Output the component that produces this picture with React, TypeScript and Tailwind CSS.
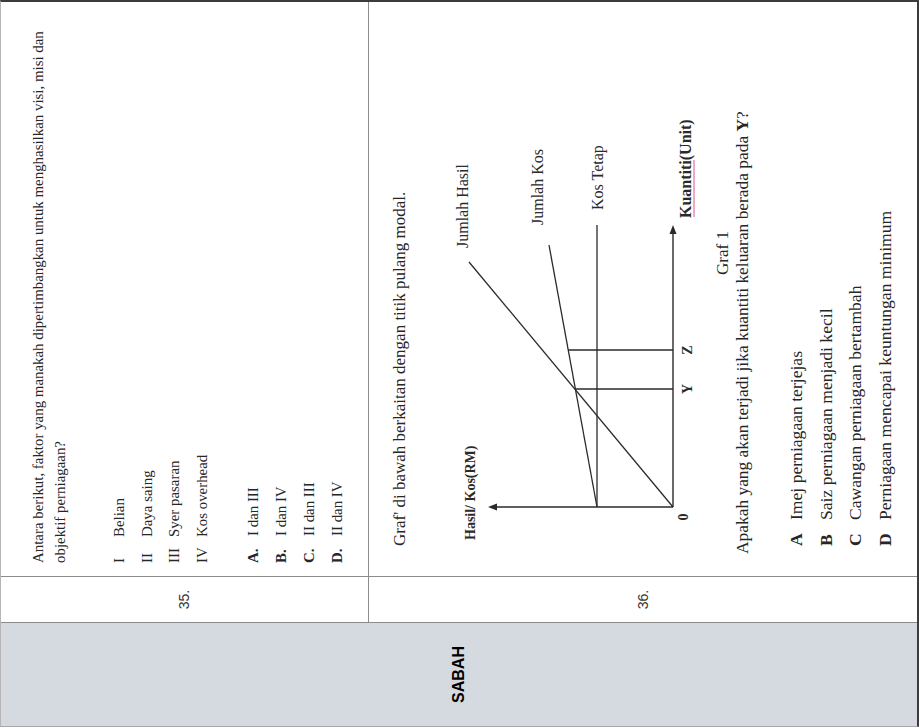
const serif = "font-['Liberation_Serif','Times_New_Roman',serif]";
const sans = "font-['Liberation_Sans',Arial,sans-serif]";

const items35 = [
  ["I", "Belian"],
  ["II", "Daya saing"],
  ["III", "Syer pasaran"],
  ["IV", "Kos overhead"],
];

const opts35 = [
  ["A.", "I dan III"],
  ["B.", "I dan IV"],
  ["C.", "II dan III"],
  ["D.", "II dan IV"],
];

const opts36 = [
  ["A", "Imej perniagaan terjejas"],
  ["B", "Saiz perniagaan menjadi kecil"],
  ["C", "Cawangan perniagaan bertambah"],
  ["D", "Perniagaan mencapai keuntungan minimum"],
];

function Graf() {
  const ink = "#2a2a2a";
  return (
    <svg width="573" height="291" viewBox="0 0 573 291" className="block">
      {/* paksi */}
      <line x1="69" y1="233" x2="69" y2="56" stroke={ink} strokeWidth="1.4" />
      <polygon points="69,48 65.5,57 72.5,57" fill={ink} />
      <line x1="69" y1="233" x2="343" y2="233" stroke={ink} strokeWidth="1.4" />
      <polygon points="351,233 342,229.5 342,236.5" fill={ink} />
      {/* garisan */}
      <line x1="69" y1="157" x2="351" y2="157" stroke={ink} strokeWidth="1.3" />
      <line x1="69" y1="157" x2="331" y2="109" stroke={ink} strokeWidth="1.3" />
      <line x1="69" y1="233" x2="314" y2="29" stroke={ink} strokeWidth="1.3" />
      <line x1="187" y1="135" x2="187" y2="233" stroke={ink} strokeWidth="1.3" />
      <line x1="226" y1="128" x2="226" y2="233" stroke={ink} strokeWidth="1.3" />
      {/* label */}
      <g fill={ink} fontFamily="'Liberation Serif', 'Times New Roman', serif" dominantBaseline="central">
        <text x="328" y="22" fontSize="16">Jumlah Hasil</text>
        <text x="351" y="97" fontSize="16">Jumlah Kos</text>
        <text x="366" y="157" fontSize="16">Kos Tetap</text>
        <text x="358" y="245" fontSize="16" fontWeight="bold">Kuantiti(Unit)</text>
        <text x="301" y="282" fontSize="17">Graf 1</text>
        <text x="36" y="30" fontSize="14" fontWeight="bold">Hasil/ Kos(RM)</text>
        <text x="59" y="243" fontSize="14" fontWeight="bold" textAnchor="middle">0</text>
        <text x="187" y="247" fontSize="14" fontWeight="bold" textAnchor="middle">Y</text>
        <text x="226" y="247" fontSize="14" fontWeight="bold" textAnchor="middle">Z</text>
      </g>
      <line x1="359" y1="254" x2="416" y2="254" stroke="#e98db3" strokeWidth="1.5" />
    </svg>
  );
}

export default function App() {
  return (
    <div className="h-[728px] w-[919px] overflow-hidden bg-white">
      {/* halaman asal diputar 90° lawan jam */}
      <div className="h-[919px] w-[728px] origin-top-left -rotate-90 translate-y-[728px] bg-white pl-[1px]">
        <div className="grid h-full grid-cols-[104px_46px_1fr] grid-rows-[368px_1fr] border-t border-l border-r-2 border-b-2 border-t-[#b5b5b5] border-l-[#a8a8a8] border-r-[#3c3c3c] border-b-[#3c3c3c] text-[#262626]">
          <div className="row-span-2 flex items-center justify-center border-r border-[#8c8c8c] bg-[#d5dae1]">
            <span className={`${sans} text-[16px] font-bold text-black`}>SABAH</span>
          </div>

          <div className="flex items-center justify-center border-r border-b border-[#8c8c8c]">
            <span className={`${sans} text-[14px] text-[#333]`}>35.</span>
          </div>
          <div className={`${serif} border-b border-[#8c8c8c] pt-[26px] pl-[13px] text-[14.9px]`}>
            <p className="leading-[22px]">
              Antara berikut, faktor yang manakah dipertimbangkan untuk menghasilkan visi, misi dan objektif perniagaan?
            </p>
            <div className="mt-[35px]">
              {items35.map(([n, t]) => (
                <div key={n} className="flex leading-[27.7px]">
                  <span className="w-[26px] shrink-0">{n}</span>
                  <span>{t}</span>
                </div>
              ))}
            </div>
            <div className="mt-[22px]">
              {opts35.map(([n, t]) => (
                <div key={n} className="flex leading-[28px]">
                  <span className="w-[27px] shrink-0 font-bold">{n}</span>
                  <span>{t}</span>
                </div>
              ))}
            </div>
          </div>

          <div className="flex items-center justify-center border-r border-[#8c8c8c]">
            <span className={`${sans} text-[14px] text-[#333]`}>36.</span>
          </div>
          <div className={`${serif} pt-[20px] text-[17px]`}>
            <p className="ml-[30px] leading-[22px]">Graf' di bawah berkaitan dengan titik pulang modal.</p>
            <div className="mt-[29px]">
              <Graf />
            </div>
            <p className="ml-[22px] text-[17.4px] leading-[22px]">
              Apakah yang akan terjadi jika kuantiti keluaran berada pada <b>Y</b>?
            </p>
            <div className="mt-[29px] ml-[30px] text-[17.6px]">
              {opts36.map(([n, t]) => (
                <div key={n} className="flex leading-[29.5px]">
                  <span className="w-[26px] shrink-0 font-bold">{n}</span>
                  <span>{t}</span>
                </div>
              ))}
            </div>
          </div>
        </div>
      </div>
    </div>
  );
}
